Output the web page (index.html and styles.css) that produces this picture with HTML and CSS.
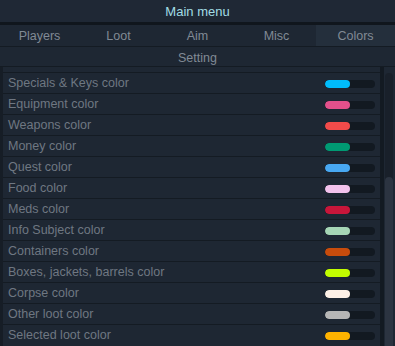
FILE: index.html
```html
<!DOCTYPE html>
<html lang="en">
<head>
<meta charset="UTF-8">
<meta name="viewport" content="width=device-width, initial-scale=1.0">
<title>Main menu</title>
<link rel="stylesheet" href="styles.css">
</head>
<body>
<div class="menu">
    <div class="title">Main menu</div>
    <div class="tabs">
        <div class="tab">Players</div>
        <div class="tab">Loot</div>
        <div class="tab">Aim</div>
        <div class="tab">Misc</div>
        <div class="tab active">Colors</div>
    </div>
    <div class="section">Setting</div>
    <div class="panel">
        <div class="list">
            <div class="row"><span>Specials &amp; Keys color</span><div class="swatch"><i style="background:#00bcfb"></i></div></div>
            <div class="row"><span>Equipment color</span><div class="swatch"><i style="background:#e3508b"></i></div></div>
            <div class="row"><span>Weapons color</span><div class="swatch"><i style="background:#f24b4a"></i></div></div>
            <div class="row"><span>Money color</span><div class="swatch"><i style="background:#009a73"></i></div></div>
            <div class="row"><span>Quest color</span><div class="swatch"><i style="background:#48a8f2"></i></div></div>
            <div class="row"><span>Food color</span><div class="swatch"><i style="background:#f2c2ec"></i></div></div>
            <div class="row"><span>Meds color</span><div class="swatch"><i style="background:#c8163a"></i></div></div>
            <div class="row"><span>Info Subject color</span><div class="swatch"><i style="background:#a6d6b6"></i></div></div>
            <div class="row"><span>Containers color</span><div class="swatch"><i style="background:#c84c0c"></i></div></div>
            <div class="row"><span>Boxes, jackets, barrels color</span><div class="swatch"><i style="background:#c2fd00"></i></div></div>
            <div class="row"><span>Corpse color</span><div class="swatch"><i style="background:#fdf0e6"></i></div></div>
            <div class="row"><span>Other loot color</span><div class="swatch"><i style="background:#b6b6b6"></i></div></div>
            <div class="row"><span>Selected loot color</span><div class="swatch"><i style="background:#ffb300"></i></div></div>
        </div>
        <div class="scrollbar"><div class="thumb"></div></div>
    </div>
</div>
</body>
</html>
```

FILE: styles.css
```css
body {
    margin: 0;
    background-color: #1e2733;
    font-family: "Liberation Sans", Arial, sans-serif;
    overflow: hidden;
}
.menu {
    width: 395px;
    height: 346px;
    overflow: hidden;
}
.title {
    height: 22px;
    line-height: 24px;
    text-align: center;
    color: #a2dde5;
    font-size: 13px;
    background-color: #1f2835;
    border-bottom: 3px solid #10161d;
}
.tabs {
    display: flex;
    height: 21px;
    border-bottom: 1px solid #141b23;
}
.tab {
    flex: 1;
    text-align: center;
    line-height: 23px;
    font-size: 12.5px;
    color: #818a95;
}
.tab.active {
    background-color: #242f3c;
}
.section {
    height: 19px;
    line-height: 22px;
    text-align: center;
    font-size: 12.5px;
    color: #818a95;
    border-bottom: 1px solid #141b23;
}
.panel {
    display: flex;
    height: 300px;
    border-left: 3px solid #161d26;
}
.list {
    flex: 1;
    padding-top: 5px;
    border-right: 4px solid #131a22;
}
.row {
    display: flex;
    align-items: center;
    justify-content: space-between;
    height: 20px;
    padding: 0 5px;
    border-top: 1px solid #141b23;
    font-size: 12.5px;
    color: #6f7782;
}
.swatch {
    width: 50px;
    height: 8px;
    margin-top: 2px;
    background-color: #121921;
    border-radius: 4px;
    overflow: hidden;
}
.swatch i {
    display: block;
    width: 25px;
    height: 8px;
    border-radius: 4px;
}
.scrollbar {
    width: 8px;
    margin: 6px 2px 0 1px;
    background-color: #19202a;
    border-radius: 4px 4px 0 0;
    padding-top: 104px;
}
.thumb {
    height: 200px;
    background-color: #2c3441;
    border-radius: 4px 4px 0 0;
}
```
